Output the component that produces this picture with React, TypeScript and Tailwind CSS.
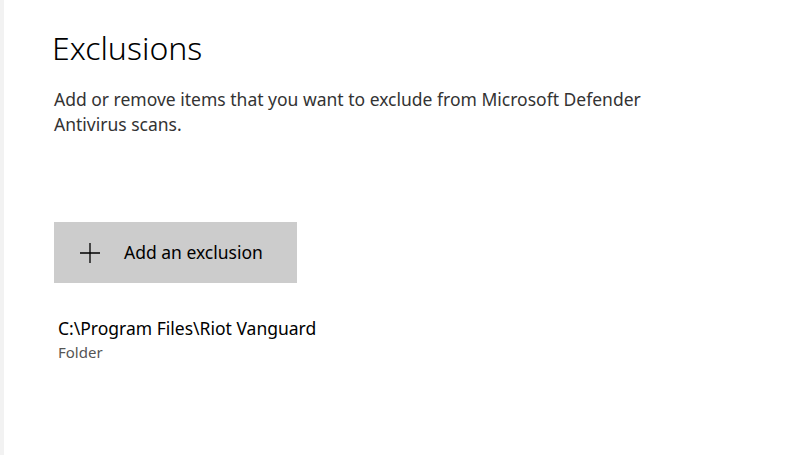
export default function App() {
  return (
    <div className="flex h-[455px] w-[809px] bg-white text-black" style={{ fontFamily: '"Noto Sans", "Open Sans", sans-serif' }}>
      <div className="w-[4px] shrink-0 bg-[#f2f2f2]" />
      <div className="flex flex-col pl-[48px] pt-[25px]">
        <h1 className="text-[32px] font-light leading-[46px] text-[#000]">Exclusions</h1>
        <p className="mt-[16px] w-[620px] pl-[2px] text-[17.5px] leading-[25px] text-[#333]">
          Add or remove items that you want to exclude from Microsoft Defender Antivirus scans.
        </p>
        <button className="ml-[2px] mt-[85px] flex h-[61px] w-[243px] items-center bg-[#cccccc] pl-[26px] text-[17.5px] text-black">
          <svg width="20" height="20" viewBox="0 0 20 20" className="shrink-0">
            <path d="M10 0V20M0 10H20" stroke="#000" strokeWidth="1.3" />
          </svg>
          <span className="ml-[24px]">Add an exclusion</span>
        </button>
        <div className="ml-[6px] mt-[33px] flex flex-col">
          <span className="text-[17.5px] leading-[24px] text-black">C:\Program Files\Riot Vanguard</span>
          <span className="mt-[2px] text-[15px] leading-[20px] text-[#555]">Folder</span>
        </div>
      </div>
    </div>
  );
}
